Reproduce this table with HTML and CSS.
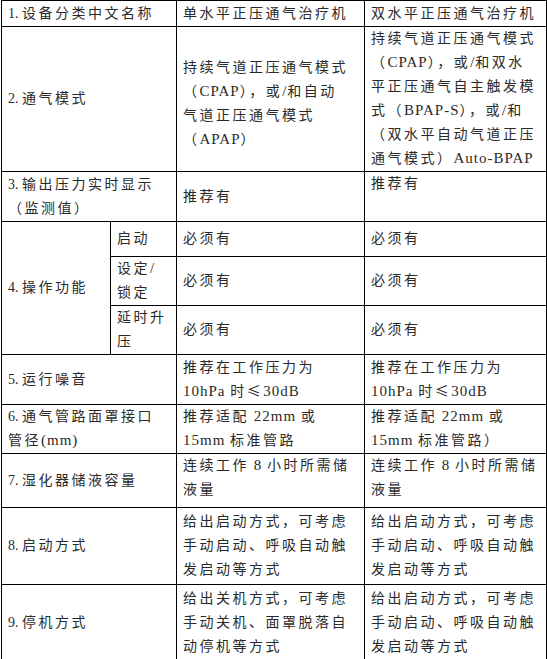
FILE: index.html
```html
<!DOCTYPE html>
<html lang="zh">
<head>
<meta charset="utf-8">
<link rel="stylesheet" href="styles.css">
</head>
<body>
<table class="spec">
  <colgroup>
    <col class="c1a"><col class="c1b"><col class="c2"><col class="c3">
  </colgroup>
  <tr class="r1">
    <td colspan="2"><span class="num">1. </span>设备分类中文名称</td>
    <td>单水平正压通气治疗机</td>
    <td>双水平正压通气治疗机</td>
  </tr>
  <tr class="r2">
    <td colspan="2"><span class="num">2. </span>通气模式</td>
    <td class="low">持续气道正压通气模式<br>（<span class="en">CPAP</span>），或<span class="en">/</span>和自动<br>气道正压通气模式<br>（<span class="en">APAP</span>）</td>
    <td class="top">持续气道正压通气模式<br>（<span class="en">CPAP</span>），或<span class="en">/</span>和双水<br>平正压通气自主触发模<br>式（<span class="en">BPAP-S</span>），或<span class="en">/</span>和<br>（双水平自动气道正压<br>通气模式）<span class="en">Auto-BPAP</span></td>
  </tr>
  <tr class="r3">
    <td colspan="2"><span class="num">3. </span>输出压力实时显示<br>（监测值）</td>
    <td>推荐有</td>
    <td class="top">推荐有</td>
  </tr>
  <tr class="r4a">
    <td rowspan="3"><span class="num">4. </span>操作功能</td>
    <td>启动</td>
    <td>必须有</td>
    <td>必须有</td>
  </tr>
  <tr class="r4b">
    <td>设定<span class="en">/</span><br>锁定</td>
    <td>必须有</td>
    <td>必须有</td>
  </tr>
  <tr class="r4c">
    <td>延时升<br>压</td>
    <td>必须有</td>
    <td>必须有</td>
  </tr>
  <tr class="r5">
    <td colspan="2"><span class="num">5. </span>运行噪音</td>
    <td>推荐在工作压力为<br><span class="en">10hPa </span>时<span class="cjk">≤</span><span class="en">30dB</span></td>
    <td>推荐在工作压力为<br><span class="en">10hPa </span>时<span class="cjk">≤</span><span class="en">30dB</span></td>
  </tr>
  <tr class="r6">
    <td colspan="2"><span class="num">6. </span>通气管路面罩接口<br>管径<span class="en">(mm)</span></td>
    <td>推荐适配<span class="en"> 22mm </span>或<br><span class="en">15mm </span>标准管路</td>
    <td>推荐适配<span class="en"> 22mm </span>或<br><span class="en">15mm </span>标准管路）</td>
  </tr>
  <tr class="r7">
    <td colspan="2"><span class="num">7. </span>湿化器储液容量</td>
    <td class="top">连续工作<span class="en"> 8 </span>小时所需储<br>液量</td>
    <td class="top">连续工作<span class="en"> 8 </span>小时所需储<br>液量</td>
  </tr>
  <tr class="r8">
    <td colspan="2"><span class="num">8. </span>启动方式</td>
    <td>给出启动方式，可考虑<br>手动启动、呼吸自动触<br>发启动等方式</td>
    <td>给出启动方式，可考虑<br>手动启动、呼吸自动触<br>发启动等方式</td>
  </tr>
  <tr class="r9">
    <td colspan="2"><span class="num">9. </span>停机方式</td>
    <td>给出关机方式，可考虑<br>手动关机、面罩脱落自<br>动停机等方式</td>
    <td>给出启动方式，可考虑<br>手动启动、呼吸自动触<br>发启动等方式</td>
  </tr>
</table>
</body>
</html>
```
FILE: styles.css
```css
html, body {
  margin: 0;
  padding: 0;
  background: #fff;
}
body {
  font-family: "Liberation Serif", "Noto Sans CJK SC", serif;
  font-size: 14px;
  color: #2a2a2a;
}
.spec {
  border-collapse: collapse;
  table-layout: fixed;
  width: 545px;
  margin: 0 0 0 1px;
}
.c1a { width: 109px; }
.c1b { width: 66px; }
.c2 { width: 188px; }
.c3 { width: 182px; }
.spec td {
  border: 1px solid #000;
  padding: 0 2px 0 6px;
  line-height: 24px;
  letter-spacing: 2.5px;
  vertical-align: middle;
  white-space: nowrap;
  overflow: hidden;
}
.spec td.top { vertical-align: top; }
.num { letter-spacing: 0; }
.en { font-size: 15px; letter-spacing: 1px; line-height: 1; }
.cjk { font-family: "Noto Sans CJK SC", sans-serif; line-height: 1; }
.r1 td { height: 25px; }
.r2 td { height: 143px; }
.r2 td.low { height: 133px; padding-top: 10px; }
.r3 td { height: 49px; }
.r4a td { height: 34px; }
.r4b td { height: 48px; }
.r4c td { height: 46px; }
.r5 td { height: 49px; }
.r6 td { height: 48px; }
.r7 td { height: 53px; }
.r8 td { height: 76px; }
.r9 td { height: 76px; }
```
